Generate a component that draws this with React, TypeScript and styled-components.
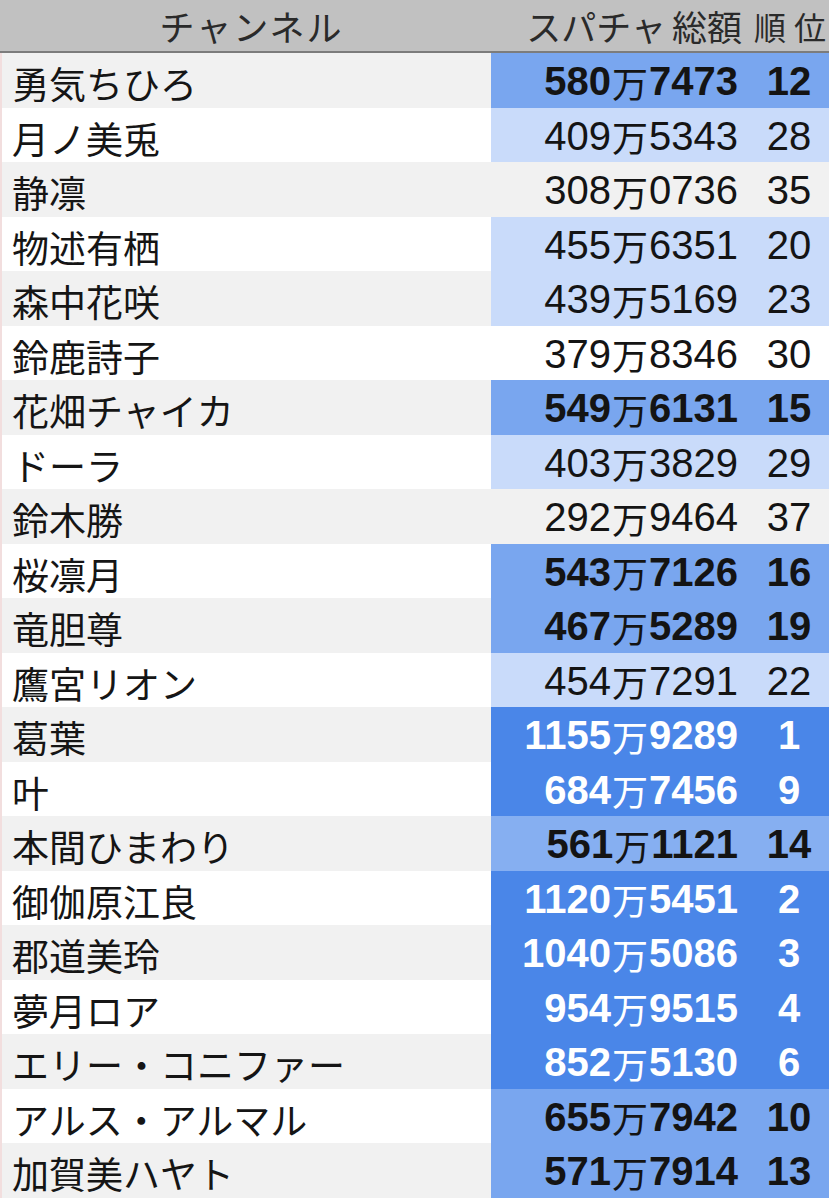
import React from "react";
import styled, { createGlobalStyle } from "styled-components";

const Global = createGlobalStyle`
  html, body { margin: 0; padding: 0; background: #ffffff; }
  body { overflow: hidden; }
`;

type Tone = "dark" | "mid" | "midLight" | "light" | "none";

interface Row {
  name: string;
  amount: string;
  rank: number;
  tone: Tone;
}

const rows: Row[] = [
  { name: "勇気ちひろ", amount: "580万7473", rank: 12, tone: "mid" },
  { name: "月ノ美兎", amount: "409万5343", rank: 28, tone: "light" },
  { name: "静凛", amount: "308万0736", rank: 35, tone: "none" },
  { name: "物述有栖", amount: "455万6351", rank: 20, tone: "light" },
  { name: "森中花咲", amount: "439万5169", rank: 23, tone: "light" },
  { name: "鈴鹿詩子", amount: "379万8346", rank: 30, tone: "none" },
  { name: "花畑チャイカ", amount: "549万6131", rank: 15, tone: "mid" },
  { name: "ドーラ", amount: "403万3829", rank: 29, tone: "light" },
  { name: "鈴木勝", amount: "292万9464", rank: 37, tone: "none" },
  { name: "桜凛月", amount: "543万7126", rank: 16, tone: "mid" },
  { name: "竜胆尊", amount: "467万5289", rank: 19, tone: "mid" },
  { name: "鷹宮リオン", amount: "454万7291", rank: 22, tone: "light" },
  { name: "葛葉", amount: "1155万9289", rank: 1, tone: "dark" },
  { name: "叶", amount: "684万7456", rank: 9, tone: "dark" },
  { name: "本間ひまわり", amount: "561万1121", rank: 14, tone: "midLight" },
  { name: "御伽原江良", amount: "1120万5451", rank: 2, tone: "dark" },
  { name: "郡道美玲", amount: "1040万5086", rank: 3, tone: "dark" },
  { name: "夢月ロア", amount: "954万9515", rank: 4, tone: "dark" },
  { name: "エリー・コニファー", amount: "852万5130", rank: 6, tone: "dark" },
  { name: "アルス・アルマル", amount: "655万7942", rank: 10, tone: "mid" },
  { name: "加賀美ハヤト", amount: "571万7914", rank: 13, tone: "mid" },
];

const toneBg: Record<Tone, string | null> = {
  dark: "#4a86e8",
  mid: "#79a6ef",
  midLight: "#86aff1",
  light: "#c9dbfa",
  none: null,
};

const Table = styled.div`
  width: 829px;
  display: flex;
  flex-direction: column;
`;

const HeaderRow = styled.div`
  display: grid;
  grid-template-columns: 491px 259px 1fr;
  height: 51px;
  background: #c1c1c1;
  border-bottom: 2px solid #7c7c7c;
  font-family: "Noto Sans CJK JP", "Noto Sans", sans-serif;
  color: #2a2a2a;
  font-size: 35px;
  font-weight: 400;
`;

const HeadCell = styled.div<{ $align: "center" | "right" }>`
  display: flex;
  align-items: center;
  justify-content: ${(p) => (p.$align === "center" ? "center" : "flex-end")};
  padding-right: ${(p) => (p.$align === "right" ? "8px" : "0")};
  padding-left: ${(p) => (p.$align === "center" ? "12px" : "0")};
  white-space: nowrap;
  letter-spacing: ${(p) => (p.$align === "center" ? "2px" : "0px")};
`;

const RankHead = styled.div`
  display: flex;
  align-items: center;
  justify-content: flex-end;
  gap: 8px;
  padding-right: 3px;
  font-size: 32px;
  white-space: nowrap;
`;

const Gap = styled.span<{ $w: number }>`
  display: inline-block;
  width: ${(p) => p.$w}px;
`;

const BodyRow = styled.div<{ $odd: boolean }>`
  display: grid;
  grid-template-columns: 491px 259px 1fr;
  height: 54.5px;
  background: ${(p) => (p.$odd ? "#f1f1f1" : "#ffffff")};
`;

const NameCell = styled.div`
  display: flex;
  align-items: center;
  padding-left: 10px;
  padding-top: 3px;
  font-family: "Noto Sans CJK JP", "Noto Sans", sans-serif;
  font-size: 37px;
  color: #151515;
  white-space: nowrap;
  border-left: 2px solid #f2dede;
`;

const ValueArea = styled.div<{ $bg: string | null; $tone: Tone }>`
  grid-column: 2 / 4;
  display: grid;
  grid-template-columns: 259px 1fr;
  background: ${(p) => p.$bg ?? "transparent"};
  color: ${(p) => (p.$tone === "dark" ? "#ffffff" : "#141414")};
  font-weight: ${(p) =>
    p.$tone === "dark" || p.$tone === "mid" || p.$tone === "midLight" ? 700 : 400};
  font-family: "Liberation Sans", Arial, "Noto Sans CJK JP", sans-serif;
  font-size: 40px;
`;

const AmountCell = styled.div`
  display: flex;
  align-items: center;
  justify-content: flex-end;
  padding-right: 12px;
  white-space: nowrap;
`;

const Man = styled.span`
  font-family: "Noto Sans CJK JP", sans-serif;
  font-weight: 400;
  font-size: 36px;
  margin: 0 1px;
`;

const RankCell = styled.div`
  display: flex;
  align-items: center;
  justify-content: center;
  padding-right: 1px;
`;

function Amount({ text }: { text: string }) {
  const [a, b] = text.split("万");
  return (
    <AmountCell>
      {a}
      <Man>万</Man>
      {b}
    </AmountCell>
  );
}

export default function App() {
  return (
    <>
      <Global />
      <Table>
        <HeaderRow>
          <HeadCell $align="center">チャンネル</HeadCell>
          <HeadCell $align="right">
            スパチャ
            <Gap $w={6} />
            総額
          </HeadCell>
          <RankHead>
            <span>順</span>
            <span>位</span>
          </RankHead>
        </HeaderRow>
        {rows.map((r, i) => (
          <BodyRow key={r.name} $odd={i % 2 === 0}>
            <NameCell>{r.name}</NameCell>
            <ValueArea $bg={toneBg[r.tone]} $tone={r.tone}>
              <Amount text={r.amount} />
              <RankCell>{r.rank}</RankCell>
            </ValueArea>
          </BodyRow>
        ))}
      </Table>
    </>
  );
}
